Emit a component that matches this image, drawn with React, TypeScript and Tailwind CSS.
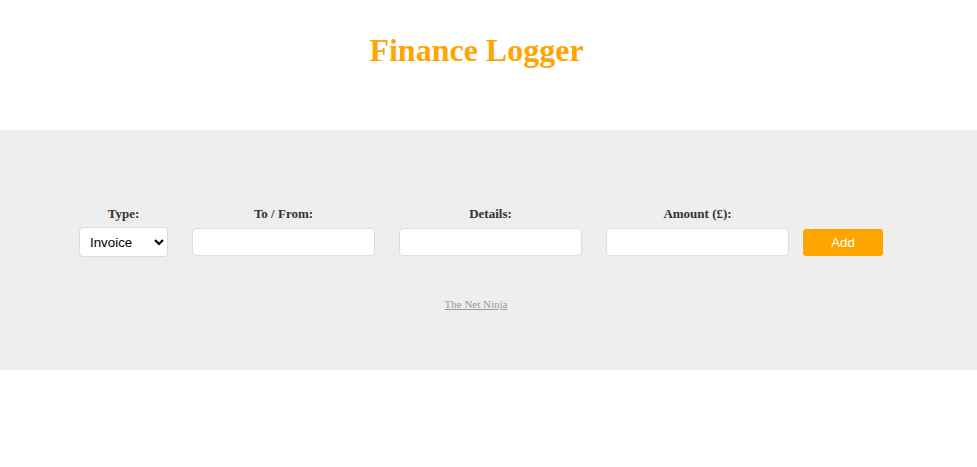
export default function App() {
  const fields = [
    { label: "To / From:", id: "tofrom" },
    { label: "Details:", id: "details" },
    { label: "Amount (£):", id: "amount" },
  ];

  return (
    <div className="w-full min-h-screen bg-white">
      <header className="h-[130px] pt-[32px] pr-[24px] text-center">
        <h1 className="font-['Liberation_Serif',serif] text-[32px] leading-[37px] font-bold text-[#ffa500]">
          Finance Logger
        </h1>
      </header>

      <div className="h-[240px] bg-[#eeeeee] pt-[76px]">
        <form className="flex items-start pl-[79px]">
          <div className="flex flex-col items-center w-[89px] mr-[24px]">
            <label className="font-['Liberation_Serif',serif] text-[13px] leading-[16px] font-bold text-[#333] mb-[5px]">
              Type:
            </label>
            <select className="w-[89px] h-[30px] pl-[6px] bg-white border border-[#dddddd] rounded-[4px] font-['Liberation_Sans',sans-serif] text-[13.33px] text-black">
              <option>Invoice</option>
              <option>Payment</option>
            </select>
          </div>

          {fields.map((f, i) => (
            <div
              key={f.id}
              className={
                i < fields.length - 1
                  ? "flex flex-col items-center w-[183px] mr-[24px]"
                  : "flex flex-col items-center w-[183px] mr-[14px]"
              }
            >
              <label className="font-['Liberation_Serif',serif] text-[13px] leading-[16px] font-bold text-[#333] mb-[6px]">
                {f.label}
              </label>
              <input
                type="text"
                className="w-[183px] h-[28px] bg-white border border-[#dddddd] rounded-[4px]"
              />
            </div>
          ))}

          <button
            type="button"
            className="mt-[23px] w-[80px] h-[27px] bg-[#ffa500] rounded-[3px] text-white font-['Liberation_Sans',sans-serif] text-[13.33px]"
          >
            Add
          </button>
        </form>

        <div className="mt-[33px] pr-[25px] text-center">
          <a
            href="#"
            className="font-['Liberation_Serif',serif] text-[11px] leading-[13px] text-[#999] underline"
          >
            The Net Ninja
          </a>
        </div>
      </div>
    </div>
  );
}
